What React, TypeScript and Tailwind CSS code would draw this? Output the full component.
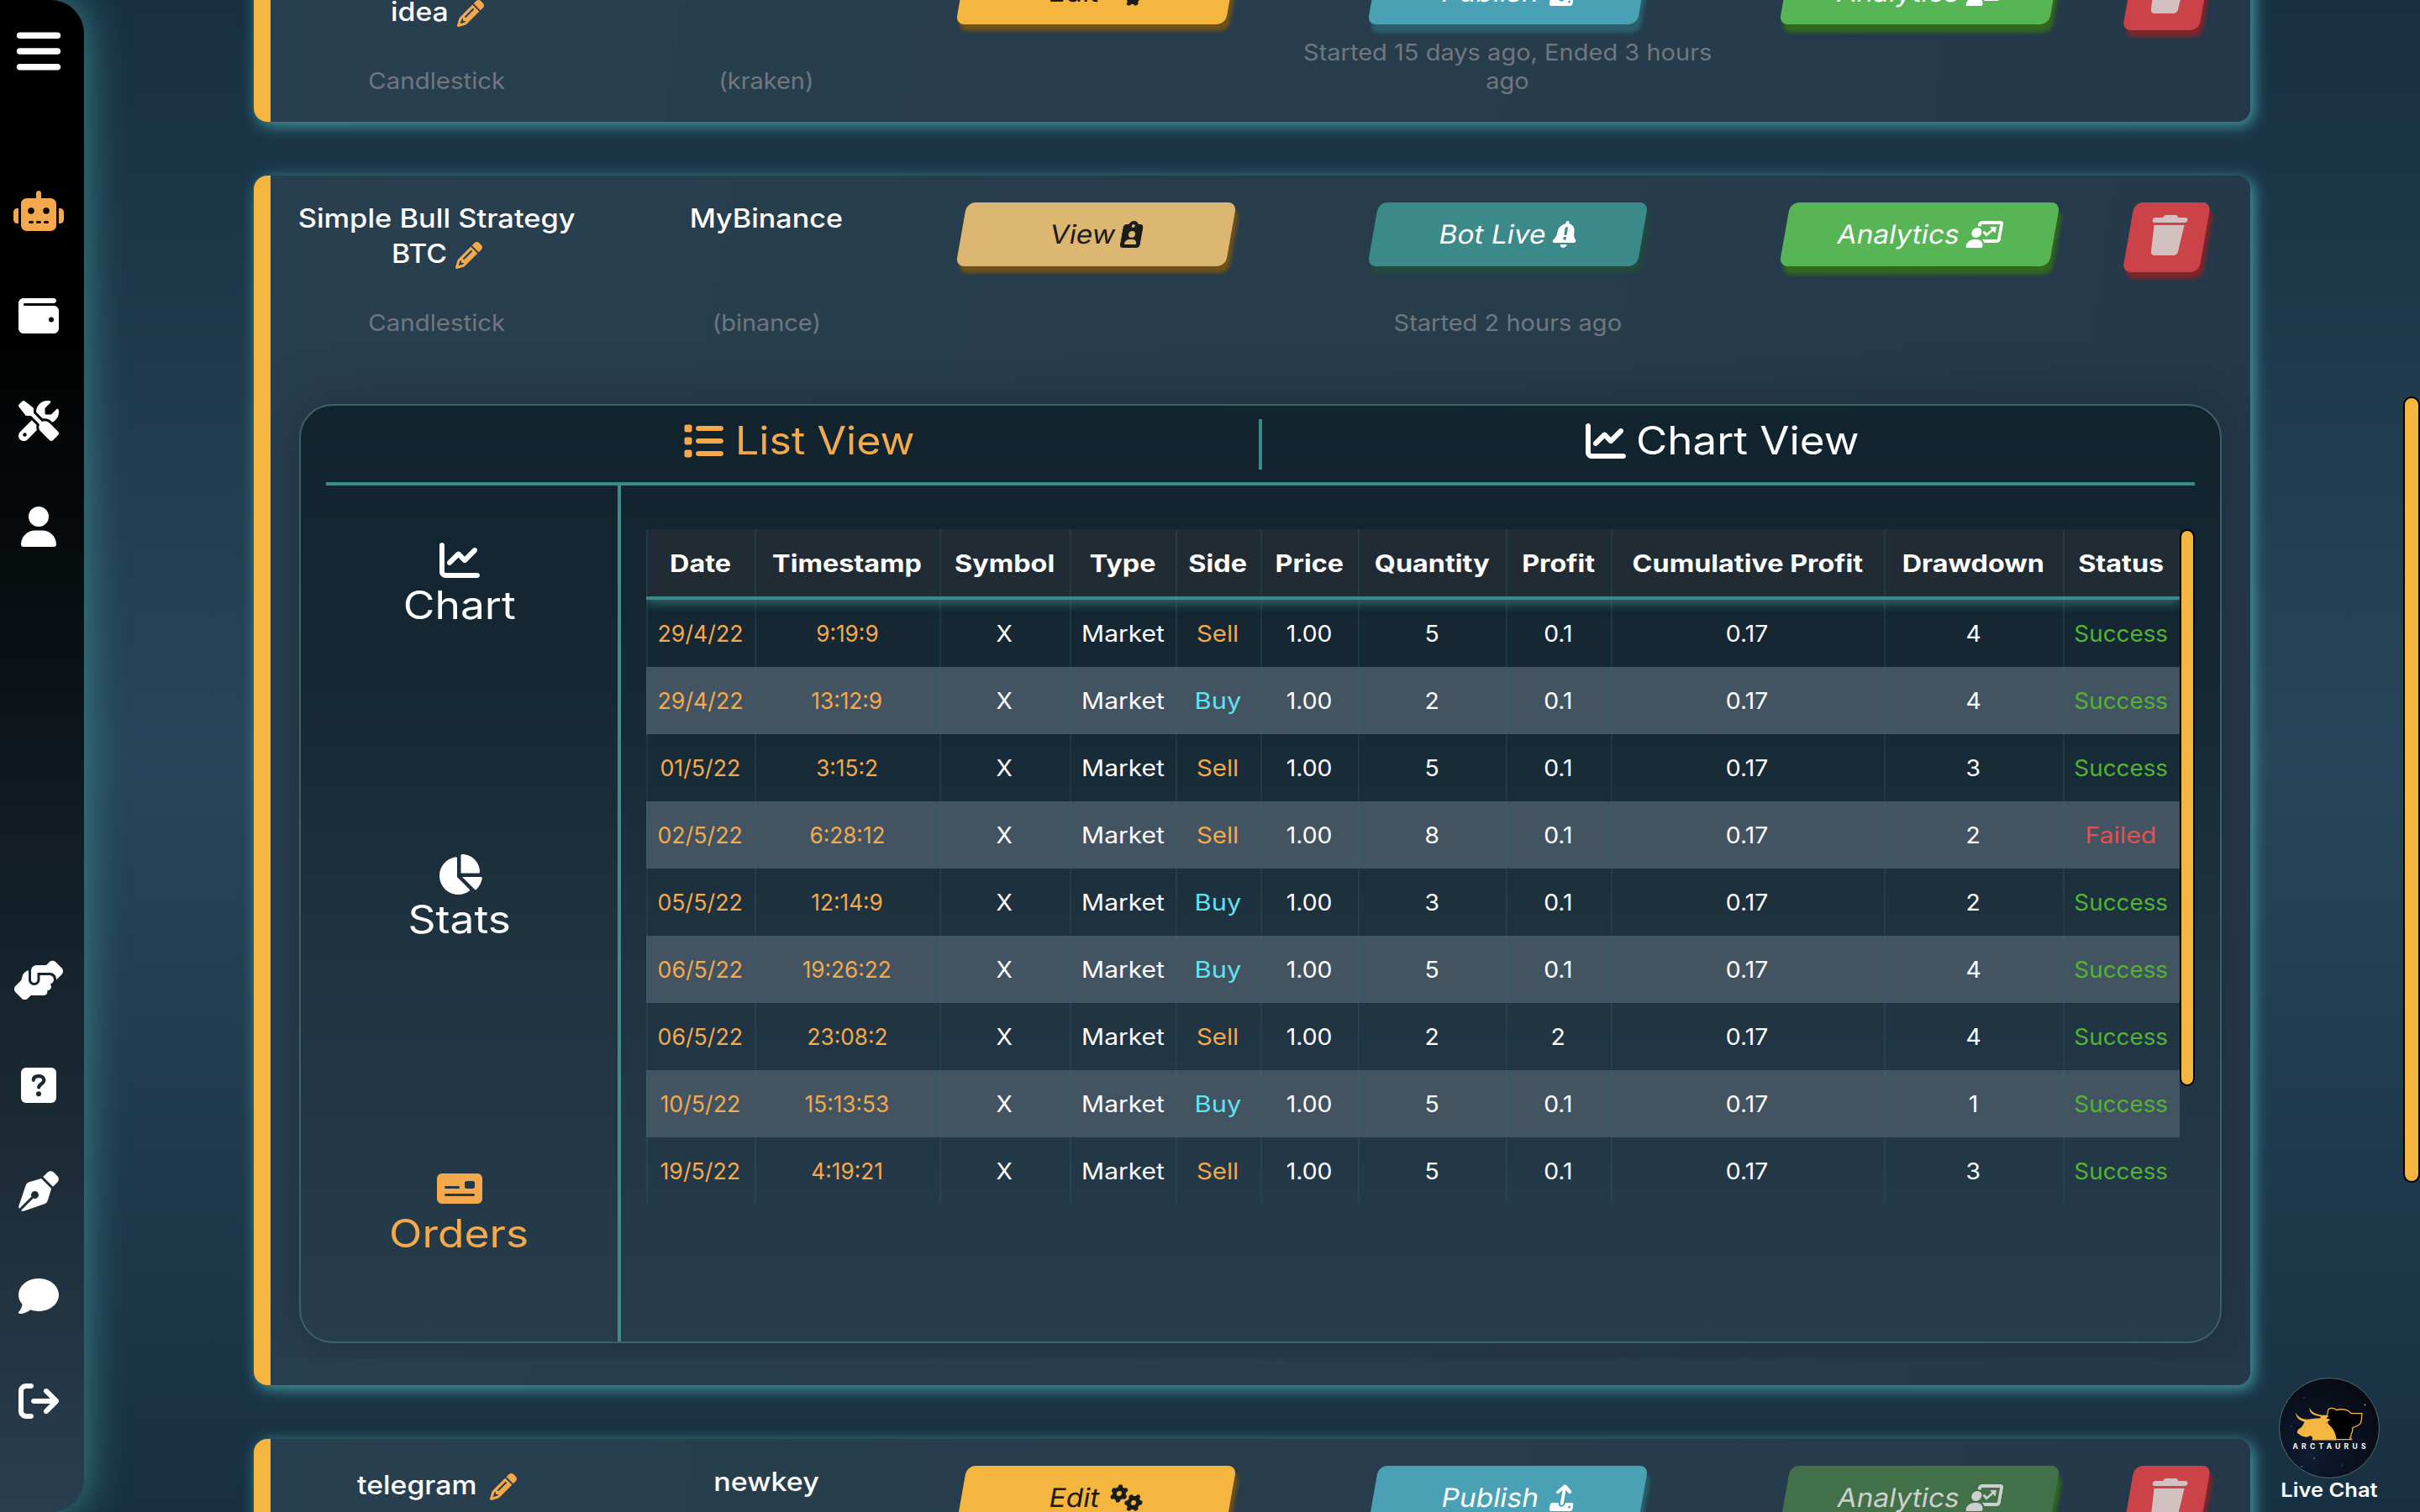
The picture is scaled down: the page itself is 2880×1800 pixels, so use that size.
import React from 'react'
import {
  FaArrowRightFromBracket,
  FaBars,
  FaChartLine,
  FaChartPie,
  FaClipboardUser,
  FaComment,
  FaGears,
  FaHandshakeAngle,
  FaList,
  FaMoneyCheck,
  FaPenNib,
  FaPencil,
  FaRobot,
  FaScrewdriverWrench,
  FaTrash,
  FaUser,
  FaWallet,
} from 'react-icons/fa6'

function SquareQuestionIcon() {
  return (
    <svg viewBox="0 0 448 512" className="h-12 w-[42px]" fill="none">
      <rect y="32" width="448" height="448" rx="64" fill="currentColor" />
      <path
        d="M158 190c0-34 26-50 62-50h14c34 0 58 22 58 52 0 44-66 46-66 90"
        stroke="#1a2831"
        strokeWidth="44"
        strokeLinecap="round"
      />
      <circle cx="224" cy="366" r="32" fill="#1a2831" />
    </svg>
  )
}

function BellAlertIcon() {
  return (
    <svg viewBox="0 0 448 512" className="h-8 w-7 shrink-0" fill="currentColor">
      <path d="M224 0c-17.7 0-32 14.3-32 32V51.2C119 66 64 130.6 64 208v18.8c0 47-17.3 92.4-48.5 127.6l-7.4 8.3c-8.4 9.4-10.4 22.9-5.3 34.4S19.4 416 32 416H416c12.6 0 24-7.4 29.2-18.9s3.1-25-5.3-34.4l-7.4-8.3C401.3 319.2 384 273.9 384 226.8V208c0-77.4-55-142-128-156.8V32c0-17.7-14.3-32-32-32zm45.3 493.3c12-12 18.7-28.3 18.7-45.3H160c0 17 6.7 33.3 18.7 45.3s28.3 18.7 45.3 18.7s33.3-6.7 45.3-18.7z" />
      <path d="M224 136v112" stroke="#3c8989" strokeWidth="52" strokeLinecap="round" />
      <circle cx="224" cy="332" r="31" fill="#3c8989" />
    </svg>
  )
}

function PresenterIcon() {
  return (
    <svg viewBox="0 0 640 512" className="h-8 w-10 shrink-0" fill="currentColor">
      <path d="M160 64c0-35.300 28.700-64 64-64H576c35.300 0 64 28.700 64 64V352c0 35.300-28.700 64-64 64H336.800c-11.800-25.500-29.900-47.500-52.400-64H576V64H224v49.100C205.200 102.200 183.300 96 160 96V64zm0 64a96 96 0 1 1 0 192 96 96 0 1 1 0-192zM133.300 352h53.300C260.300 352 320 411.700 320 485.300c0 14.700-11.900 26.700-26.700 26.700H26.700C11.900 512 0 500.100 0 485.300C0 411.700 59.700 352 133.300 352z" />
      <path d="M302 214l54 54 104-104" fill="none" stroke="currentColor" strokeWidth="44" strokeLinecap="round" />
      <path d="M406 118h104v104z" stroke="currentColor" strokeWidth="14" strokeLinejoin="round" />
    </svg>
  )
}

function PublishIcon() {
  return (
    <svg viewBox="0 0 448 512" className="h-8 w-7 shrink-0" fill="none">
      <path
        d="M44 352h116v12c0 35 28 64 64 64s64-29 64-64v-12h116c24 0 44 20 44 44v72c0 24-20 44-44 44H44c-24 0-44-20-44-44v-72c0-24 20-44 44-44z"
        fill="currentColor"
      />
      <circle cx="376" cy="432" r="24" fill="#4aa0b5" />
      <path
        d="M224 366V48M112 146L224 36l112 110"
        stroke="currentColor"
        strokeWidth="62"
        strokeLinecap="round"
        strokeLinejoin="round"
      />
    </svg>
  )
}

function Sidebar() {
  const item = 'flex h-[125.4px] items-center justify-center'
  return (
    <aside className="relative z-10 flex h-[1800px] w-[100px] shrink-0 flex-col rounded-r-[40px] bg-[linear-gradient(180deg,#000_0,#000_380px,#070c0f_680px,#14212a_1100px,#1a2831_1300px,#20303e_1500px,#293e4f_1800px)] pr-2 text-white shadow-[0_0_50px_#3c8a8c]">
      <div className="flex h-[188px] justify-center pt-[31px]">
        <FaBars className="size-[60px]" />
      </div>
      <nav className="flex flex-col text-5xl">
        <div className={item}><FaRobot className="h-12 w-[60px] text-[#f4a94c]" /></div>
        <div className={item}><FaWallet /></div>
        <div className={item}><FaScrewdriverWrench /></div>
        <div className={item}><FaUser /></div>
      </nav>
      <nav className="mt-auto mb-[69px] flex flex-col text-5xl">
        <div className={item}><FaHandshakeAngle className="h-12 w-[60px]" /></div>
        <div className={item}><SquareQuestionIcon /></div>
        <div className={item}><FaPenNib /></div>
        <div className={item}><FaComment /></div>
        <div className={item}><FaArrowRightFromBracket /></div>
      </nav>
    </aside>
  )
}

const tones = {
  amber: 'bg-[#f4b63f] text-[#1c1c1c] shadow-[5px_8px_4px_#6f521b]',
  sand: 'bg-[#dcb771] text-[#1c1c1c] shadow-[5px_8px_4px_#6f521b]',
  teal: 'bg-[#3c8989] text-white shadow-[5px_8px_4px_#234a3e]',
  blue: 'bg-[#4aa0b5] text-white shadow-[5px_10px_4px_#2a5f6a]',
  green: 'bg-[#57b556] text-white shadow-[5px_10px_4px_#31671f]',
  dim: 'bg-[#427048] text-[#cfcfcf] shadow-[5px_10px_4px_#31671f]',
}

type ActionProps = { tone: keyof typeof tones; label: string; width: string; icon: React.ReactNode }

function Action({ tone, label, width, icon }: ActionProps) {
  return (
    <div className={`flex h-[76px] w-[321px] -skew-x-[10deg] items-center justify-center rounded-[10px] text-[31px] ${tones[tone]}`}>
      <div className={`${width} shrink-0`}>
        <span className="inline-block origin-left scale-x-[1.08] whitespace-nowrap">{label}</span>
      </div>
      {icon}
    </div>
  )
}

function DeleteButton() {
  return (
    <div className="flex h-[83px] w-[91px] -skew-x-[10deg] items-center justify-center rounded-[10px] bg-[#cb4349] pb-1.5 text-[#d3c0c0] shadow-[5px_8px_4px_#7c262b]">
      <FaTrash className="h-12 w-[42px]" />
    </div>
  )
}

type HeaderProps = {
  first?: string
  last: string
  lastWidth: string
  exchange?: string
  kind?: string
  account?: string
  edit: React.ReactNode
  publish: React.ReactNode
  analytics: React.ReactNode
  status?: string[]
}

const muted = 'relative top-px inline-block h-[34px] whitespace-nowrap text-[27px] leading-[34px] text-[#70777f]'

function BotHeader(p: HeaderProps) {
  return (
    <div className="grid h-48 grid-cols-[392px_392px_392px_588px_392px_196px] pt-8 pl-0.5">
      <div className="flex flex-col items-center justify-between text-[31px] font-medium">
        <div className="flex flex-col items-center">
          {p.first !== undefined && (
            <span className="inline-block h-[38px] scale-x-[1.11] leading-[38px] whitespace-nowrap">{p.first}</span>
          )}
          <div className="flex h-[47px] items-center">
            <div className={p.lastWidth}>
              <span className="inline-block origin-left scale-x-[1.09]">{p.last}</span>
            </div>
            <FaPencil className="mt-0.5 size-8 text-[#f4a94c]" />
          </div>
        </div>
        <span className={`${muted} scale-x-[1.09] font-normal`}>{p.kind}</span>
      </div>
      <div className="flex flex-col items-center justify-between">
        <span className="inline-block h-[38px] scale-x-[1.1] text-[31px] leading-[38px] font-medium">{p.account}</span>
        <span className={`${muted} scale-x-[1.07]`}>{p.exchange}</span>
      </div>
      <div className="flex justify-center">{p.edit}</div>
      <div className="flex flex-col items-center justify-between">
        {p.publish}
        <div className="flex flex-col items-center">
          {p.status?.map((line) => (
            <span key={line} className={`${muted} scale-x-[1.075]`}>{line}</span>
          ))}
        </div>
      </div>
      <div className="flex justify-center">{p.analytics}</div>
      <div className="flex justify-center"><DeleteButton /></div>
    </div>
  )
}

function Card({ height, children }: { height: string; children: React.ReactNode }) {
  return (
    <section className={`${height} w-[2376px] shrink-0 rounded-2xl border-l-[20px] border-[#f4b63f] bg-[linear-gradient(100deg,#283f4f,#273d4c_55%,#24384a)] shadow-[4px_4px_18px_#45a0a6]`}>
      {children}
    </section>
  )
}

const columns = ['Date', 'Timestamp', 'Symbol', 'Type', 'Side', 'Price', 'Quantity', 'Profit', 'Cumulative Profit', 'Drawdown', 'Status']
const grid = 'grid grid-cols-[129px_220px_155px_126px_101px_116px_176px_125px_325px_213px_138.500px]'

const orders = [
  ['29/4/22', '9:19:9', 'Sell', '5', '0.1', '4', 'Success'],
  ['29/4/22', '13:12:9', 'Buy', '2', '0.1', '4', 'Success'],
  ['01/5/22', '3:15:2', 'Sell', '5', '0.1', '3', 'Success'],
  ['02/5/22', '6:28:12', 'Sell', '8', '0.1', '2', 'Failed'],
  ['05/5/22', '12:14:9', 'Buy', '3', '0.1', '2', 'Success'],
  ['06/5/22', '19:26:22', 'Buy', '5', '0.1', '4', 'Success'],
  ['06/5/22', '23:08:2', 'Sell', '2', '2', '4', 'Success'],
  ['10/5/22', '15:13:53', 'Buy', '5', '0.1', '1', 'Success'],
  ['19/5/22', '4:19:21', 'Sell', '5', '0.1', '3', 'Success'],
]

function Cell({ children, tone = 'text-white scale-x-[1.05]' }: { children: React.ReactNode; tone?: string }) {
  return (
    <div className="flex items-center justify-center border-l-2 border-[#2c6a70]/25 pt-0.5 pr-0.5">
      <span className={`whitespace-nowrap ${tone}`}>{children}</span>
    </div>
  )
}

function OrdersTable() {
  return (
    <div className="h-[800px] w-[1825px] overflow-hidden">
      <div className={`${grid} relative z-10 h-[84px] border-b-4 border-[#3c8989] bg-[#202b34] text-[28px] font-bold text-white shadow-[0_4px_12px_rgba(60,137,137,0.7)]`}>
        {columns.map((c) => (
          <Cell key={c} tone="scale-x-[1.155]">{c}</Cell>
        ))}
      </div>
      {orders.map(([date, time, side, qty, profit, drawdown, status], i) => (
        <div key={i} className={`${grid} h-20 text-[27px] ${i % 2 ? 'bg-[#425462]' : ''}`}>
          <Cell tone="text-[#f4a94c] scale-x-[0.99]">{date}</Cell>
          <Cell tone="text-[#f4a94c] scale-x-[0.97]">{time}</Cell>
          <Cell>X</Cell>
          <Cell tone="text-white scale-x-[1.11]">Market</Cell>
          <Cell tone={side === 'Sell' ? 'text-[#f4a94c] scale-x-[1.09]' : 'text-[#5fe3ee] scale-x-[1.14]'}>{side}</Cell>
          <Cell>1.00</Cell>
          <Cell>{qty}</Cell>
          <Cell>{profit}</Cell>
          <Cell>0.17</Cell>
          <Cell>{drawdown}</Cell>
          <Cell tone={status === 'Failed' ? 'text-[#e2514f] scale-x-[1.12]' : 'text-[#52b336] scale-x-[1.03]'}>{status}</Cell>
        </div>
      ))}
    </div>
  )
}

function SideTab({ icon, label, tone }: { icon: React.ReactNode; label: string; tone: string }) {
  return (
    <div className={`flex flex-col items-center ${tone}`}>
      {icon}
      <span className="h-[58px] scale-x-[1.12] text-[46px] leading-[58px]">{label}</span>
    </div>
  )
}

function Panel() {
  return (
    <div className="h-[1216px] overflow-hidden pt-20 pr-[34px] pl-[34px]">
      <div className="flex h-[1118px] flex-col rounded-[40px] border-2 border-[#3c6167] bg-[linear-gradient(180deg,#11232d,#152834_30%,#1f3341_60%,#273d4c)] shadow-[0_0_60px_rgba(28,32,48,0.55)]">
        <div className="mx-[30px] flex h-[95px] shrink-0 items-center justify-center border-b-4 border-[#3c8989] text-[46px]">
          <div className="flex w-[1096px] items-center justify-center pb-2 text-[#f4a94c]">
            <FaList className="mr-3.5 size-12" />
            <span className="w-[213px]"><span className="inline-block origin-left scale-x-[1.09] whitespace-nowrap">List View</span></span>
          </div>
          <div className="h-[60px] w-1 bg-[#3c8989]" />
          <div className="flex w-[1096px] items-center justify-center pb-2 text-white">
            <FaChartLine className="mr-3 size-12" />
            <span className="w-[267px]"><span className="inline-block origin-left scale-x-[1.11] whitespace-nowrap">Chart View</span></span>
          </div>
        </div>
        <div className="flex flex-1">
          <div className="flex w-[381px] flex-col gap-[268px] border-r-4 border-[#438a8a] pt-[65px]">
            <SideTab label="Chart" tone="text-white" icon={<FaChartLine className="size-12" />} />
            <SideTab label="Stats" tone="text-white" icon={<FaChartPie className="h-12 w-[54px]" />} />
            <SideTab label="Orders" tone="text-[#f4a94c]" icon={<FaMoneyCheck className="h-12 w-[54px]" />} />
          </div>
          <div className="flex pt-[52px] pl-[30px]">
            <OrdersTable />
            <div className="h-[663px] w-[18px] rounded-full border-2 border-black bg-[#f4b63f]" />
          </div>
        </div>
      </div>
    </div>
  )
}

function LiveChat() {
  return (
    <div className="absolute top-[1640px] left-[2702px] flex w-[140px] flex-col items-center">
      <svg viewBox="0 0 120 120" className="size-[120px]">
        <defs>
          <radialGradient id="space" cx="0.3" cy="0.75" r="0.9">
            <stop offset="0" stopColor="#0f1c33" />
            <stop offset="0.5" stopColor="#0a1120" />
            <stop offset="1" stopColor="#07090d" />
          </radialGradient>
        </defs>
        <circle cx="60" cy="60" r="59.500" fill="url(#space)" stroke="#6b7c88" strokeWidth="0.8" />
        <g fill="#8fa6c4">
          <circle cx="102.500" cy="32.500" r="0.9" />
          <circle cx="42" cy="96" r="0.8" />
          <circle cx="27" cy="106" r="0.7" />
          <circle cx="30" cy="24" r="0.5" />
          <circle cx="75" cy="104" r="0.5" />
          <circle cx="15" cy="58" r="0.5" />
        </g>
        <path
          d="M56 46C59 44 58 42 58.500 39C60 35.500 66 35.500 68 38.500C73 37.500 79 37.500 82.500 39.500L86 42.500L98.800 42.700C99 47 98.500 50 97.500 54C95 58 90 58 87.500 60C89 64 85 67 86 70L84.500 71.500L86.500 73.700H66L57 52Z"
          fill="#000"
          stroke="#f4b63f"
          strokeWidth="1.300"
        />
        <path
          d="M20 41.500C23 47.500 28 50 35 49.700L44 48.500C51 49 52 46.500 46 45.500C40 44.500 36 41 36.500 35.700C39 41.500 44 43.500 50 44.500C54 45 57 44.500 59.500 45.500L56.500 48.500L61.500 50L56 54C63 57 68 65 68.700 74.500H39.500C41 71 39 69 36 69.800L33 71L27 69.500L22 66C21 63 24 61 27 59C29 56 30 54 30.500 52.500C25 51.500 20.500 48 20 41.500Z"
          fill="#f4b63f"
        />
        <text x="16.500" y="84.800" textLength="87" lengthAdjust="spacing" fontFamily="Inter, sans-serif" fontSize="8.500" fontWeight="700" fill="#fff">
          ARCTAURUS
        </text>
      </svg>
      <span className="-mt-0.5 scale-x-[1.11] text-[23px] leading-8 font-semibold whitespace-nowrap">Live Chat</span>
    </div>
  )
}

export default function App() {
  return (
    <div className="relative flex h-[1800px] w-[2880px] overflow-hidden bg-[linear-gradient(180deg,#173042,#27455a_50%,#173042)] font-['Inter',sans-serif] text-white">
      <Sidebar />
      <main className="-mt-[79px] ml-[202px] flex flex-col gap-16">
        <Card height="h-[224px]">
          <BotHeader
            first=""
            last="idea"
            lastWidth="w-[79px]"
            kind="Candlestick"
            exchange="(kraken)"
            edit={<Action tone="amber" label="Edit" width="w-[72px]" icon={<FaGears className="h-8 w-10 shrink-0" />} />}
            publish={<Action tone="blue" label="Publish" width="w-[130px]" icon={<PublishIcon />} />}
            analytics={<Action tone="green" label="Analytics" width="w-[155px]" icon={<PresenterIcon />} />}
            status={['Started 15 days ago, Ended 3 hours', 'ago']}
          />
        </Card>
        <Card height="h-[1440px]">
          <BotHeader
            first="Simple Bull Strategy"
            last="BTC"
            lastWidth="w-[76px]"
            kind="Candlestick"
            account="MyBinance"
            exchange="(binance)"
            edit={<Action tone="sand" label="View" width="w-[85px]" icon={<FaClipboardUser className="h-8 w-6 shrink-0" />} />}
            publish={<Action tone="teal" label="Bot Live" width="w-[136px]" icon={<BellAlertIcon />} />}
            analytics={<Action tone="green" label="Analytics" width="w-[155px]" icon={<PresenterIcon />} />}
            status={['Started 2 hours ago']}
          />
          <Panel />
        </Card>
        <Card height="h-[224px]">
          <BotHeader
            last="telegram"
            lastWidth="w-[158px]"
            account="newkey"
            edit={<Action tone="amber" label="Edit" width="w-[72px]" icon={<FaGears className="h-8 w-10 shrink-0" />} />}
            publish={<Action tone="blue" label="Publish" width="w-[130px]" icon={<PublishIcon />} />}
            analytics={<Action tone="dim" label="Analytics" width="w-[155px]" icon={<PresenterIcon />} />}
          />
        </Card>
      </main>
      <div className="absolute top-[472px] left-[2860px] h-[936px] w-5 rounded-full border-2 border-black bg-[#f4b63f]" />
      <LiveChat />
    </div>
  )
}
